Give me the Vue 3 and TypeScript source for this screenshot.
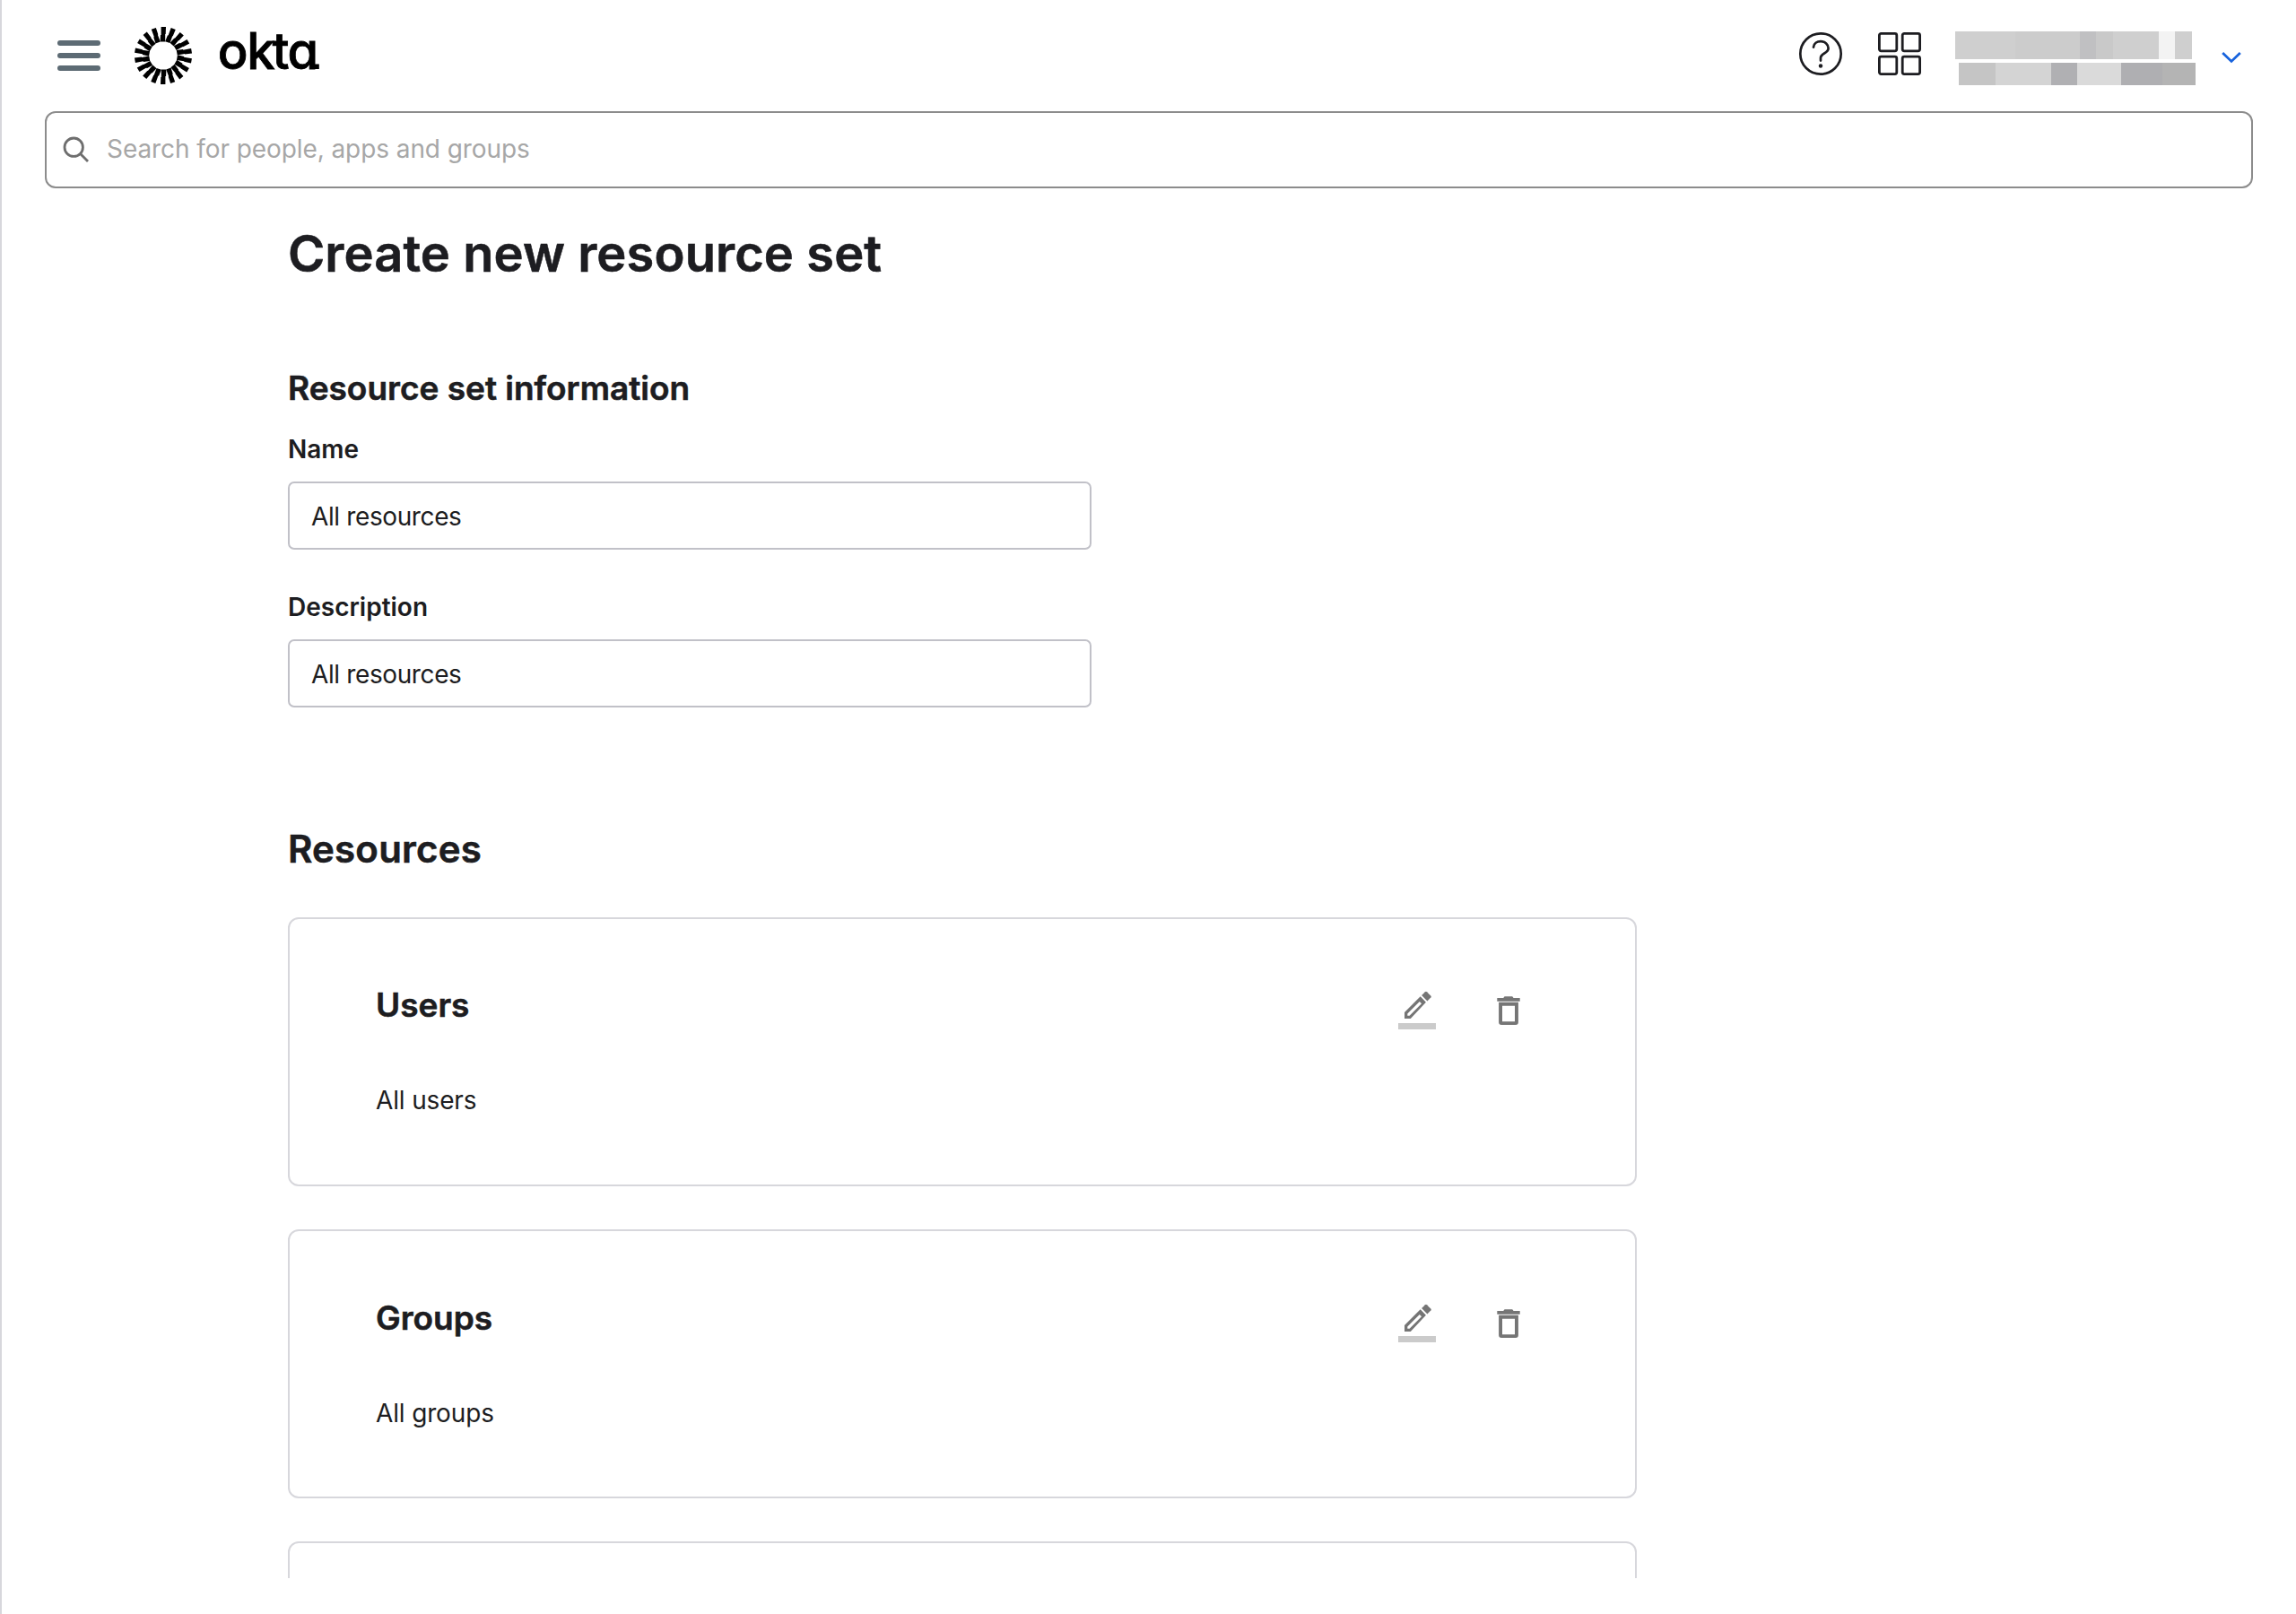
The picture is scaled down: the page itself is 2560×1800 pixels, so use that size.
<script setup lang="ts">
interface Block { width: number; color: string }
interface Field { id: string; label: string; value: string }
interface Resource { title: string; detail: string }

const rays: number[] = Array.from({ length: 18 }, (_, i) => i * 20)

const accountName: Block[] = [
  { width: 67, color: '#cfcfcf' },
  { width: 72, color: '#cccccc' },
  { width: 18, color: '#c0c0c2' },
  { width: 19, color: '#c9c9c9' },
  { width: 51, color: '#cfcfcf' },
  { width: 18, color: '#f3f3f3' },
  { width: 19, color: '#cfcfcf' },
]
const accountOrg: Block[] = [
  { width: 41, color: '#c5c5c5' },
  { width: 62, color: '#d4d4d4' },
  { width: 29, color: '#b0b0b3' },
  { width: 49, color: '#dadada' },
  { width: 46, color: '#afafb2' },
  { width: 37, color: '#b4b4b4' },
]

const fields: Field[] = [
  { id: 'name', label: 'Name', value: 'All resources' },
  { id: 'description', label: 'Description', value: 'All resources' },
]

const resources: Resource[] = [
  { title: 'Users', detail: 'All users' },
  { title: 'Groups', detail: 'All groups' },
]
</script>

<template>
  <div class="page">
    <header class="topbar">
      <button class="menu" aria-label="Menu"><i /><i /><i /></button>
      <svg class="aura" viewBox="-33 -33 66 66" width="66" height="66">
        <path
          v-for="a in rays"
          :key="a"
          d="M-2.4 -32H3L2.7 -24H2.2V-15.6H-3.4L-3.1 -23H-2.4Z"
          :transform="`rotate(${a})`"
        />
      </svg>
      <svg class="wordmark" width="116" height="60">
        <text x="0.8 33.2 61.6 78.4" y="49">okta</text>
        <path d="M104.4 41Q106 43.6 109.5 43.6H113.8V49H109.5Q104 49 103 43Z" />
      </svg>

      <div class="tools">
        <svg class="help" width="52" height="50" viewBox="0 0 52 50">
          <circle cx="26" cy="25" r="22.7" />
          <path d="M18 17.6C18.4 13.6 21.8 11.2 26 11.2C31 11.2 34.6 14.5 34.6 18.8C34.6 25 26 24 26 29.5V32.6" />
          <circle class="dot" cx="26" cy="38.5" r="2.2" />
        </svg>
        <svg class="apps" width="48" height="48" viewBox="0 0 48 48">
          <rect x="1.4" y="1.4" width="19.4" height="19.4" rx="2" />
          <rect x="27.2" y="1.4" width="19.4" height="19.4" rx="2" />
          <rect x="1.4" y="27.2" width="19.4" height="19.4" rx="2" />
          <rect x="27.2" y="27.2" width="19.4" height="19.4" rx="2" />
        </svg>
        <div class="account">
          <div class="row name">
            <i v-for="(b, i) in accountName" :key="i" :style="{ width: b.width + 'px', background: b.color }" />
          </div>
          <div class="row org">
            <i v-for="(b, i) in accountOrg" :key="i" :style="{ width: b.width + 'px', background: b.color }" />
          </div>
        </div>
        <svg class="chevron" width="22" height="14" viewBox="0 0 22 14">
          <path d="M1.2 2L11 11.4L20.8 2" />
        </svg>
      </div>
    </header>

    <div class="search">
      <svg width="30" height="30" viewBox="0 0 30 30">
        <circle cx="12.2" cy="12.2" r="10.2" />
        <path d="M19.6 19.6L28 28" />
      </svg>
      <span>Search for people, apps and groups</span>
    </div>

    <main class="content">
      <h1>Create new resource set</h1>

      <section class="info">
        <h2>Resource set information</h2>
        <div v-for="f in fields" :key="f.id" class="field">
          <label>{{ f.label }}</label>
          <div class="input">{{ f.value }}</div>
        </div>
      </section>

      <h2 class="list-title">Resources</h2>
      <div class="cards">
        <article v-for="r in resources" :key="r.title" class="card">
          <div class="card-head">
            <h3>{{ r.title }}</h3>
            <div class="actions">
              <svg class="edit" width="42" height="43" viewBox="0 0 42 43">
                <path
                  fill-rule="evenodd"
                  d="M7 31V24L24.7 6.3L30.9 12.7L13.8 31ZM10.3 27.7H12.6L26 14.2L23.8 12L10.3 25.5Z"
                />
                <path d="M26.1 5.1L30 1.2Q30.9 .4 31.9 1.2L36.5 5.7Q37.1 6.5 36.5 7.2L32.4 11.4Z" />
                <rect class="bar" y="36" width="42" height="7" />
              </svg>
              <svg class="trash" width="26" height="34" viewBox="0 0 26 34">
                <path d="M.3 3H7.2L8.6 1.2H17.2L18.6 3H25.7V6.7H.3Z" />
                <path
                  fill-rule="evenodd"
                  d="M2.1 7.8H23.9V30Q23.9 33 20.9 33H5.1Q2.1 33 2.1 30ZM6 11.7V29.2H20V11.7Z"
                />
              </svg>
            </div>
          </div>
          <p>{{ r.detail }}</p>
        </article>
        <article class="card" />
      </div>
    </main>
  </div>
</template>

<style>
body {
  margin: 0;
  background: #fff;
}
</style>

<style scoped>
.page {
  box-sizing: border-box;
  height: 1800px;
  overflow: hidden;
  border-left: 2px solid #d7d7dc;
  background: #fff;
  color: #1d1d21;
  font: 400 28px/34px Inter, sans-serif;
}
h1, h2, h3, p {
  margin: 0;
}
h1, h2, h3 {
  -webkit-text-stroke: 0.6px currentColor;
}
.topbar {
  display: flex;
  align-items: flex-start;
  height: 124px;
  padding: 0 61px 0 62px;
}
.menu {
  display: flex;
  flex-direction: column;
  gap: 8px;
  width: 48px;
  margin: 45px 37px 0 0;
  padding: 0;
  border: 0;
  background: none;
}
.menu i {
  height: 6px;
  border-radius: 3px;
  background: #5d6b74;
}
.aura {
  margin-top: 29px;
}
.wordmark {
  margin: 28px 0 0 27px;
  overflow: visible;
  font-size: 56px;
  font-weight: 500;
  font-feature-settings: 'cv11';
  fill: #000;
}
.wordmark text {
  stroke: #000;
  stroke-width: 0.8;
}
.tools {
  display: flex;
  align-items: flex-start;
  margin-left: auto;
}
.help, .apps, .chevron, .search svg {
  fill: none;
  stroke: #1d1d21;
}
.help {
  margin-top: 35px;
  stroke-width: 2.7;
  stroke-linecap: round;
}
.help .dot {
  fill: #1d1d21;
  stroke: none;
}
.apps {
  margin: 36px 0 0 38px;
  stroke-width: 2.8;
}
.account {
  margin: 35px 0 0 38px;
  width: 268px;
}
.row {
  display: flex;
}
.name {
  height: 31px;
}
.org {
  height: 25px;
  margin: 4px 0 0 4px;
}
.chevron {
  margin: 57px 0 0 29px;
  stroke: #1662dd;
  stroke-width: 2.8;
}
.search {
  box-sizing: border-box;
  display: flex;
  align-items: flex-start;
  height: 86px;
  margin: 0 48px;
  border: 2px solid #8c8c8c;
  border-radius: 12px;
  color: #a7a7a7;
}
.search svg {
  margin: 26px 0 0 18px;
  stroke: #6e6e6e;
  stroke-width: 2.8;
}
.search span {
  margin: 23px 0 0 19px;
  letter-spacing: -0.08px;
}
.content {
  width: 1504px;
  height: 1550px;
  padding-top: 39px;
  margin-left: 319px;
  box-sizing: border-box;
  overflow: hidden;
}
h1 {
  font-size: 56px;
  font-weight: 600;
  line-height: 68px;
  letter-spacing: 0.1px;
}
.info {
  margin-top: 94px;
}
h2 {
  font-size: 37px;
  font-weight: 600;
  line-height: 44px;
}
.field {
  display: flex;
  flex-direction: column;
  gap: 19px;
  width: 896px;
  margin-top: 29px;
}
.field + .field {
  margin-top: 47px;
}
.field label {
  font-weight: 600;
}
.input {
  box-sizing: border-box;
  height: 76px;
  padding: 20px 24px;
  border: 2px solid #c1c1c8;
  border-radius: 7px;
  letter-spacing: -0.38px;
}
.list-title {
  margin-top: 133px;
  font-size: 42px;
  line-height: 50px;
  letter-spacing: 0.2px;
}
.cards {
  display: flex;
  flex-direction: column;
  gap: 48px;
  margin-top: 51px;
}
.card {
  box-sizing: border-box;
  flex: none;
  height: 300px;
  padding: 74px 128px 0 96px;
  border: 2px solid #d7d7dc;
  border-radius: 12px;
}
.card + .card {
  padding-top: 75px;
}
.card-head {
  display: flex;
  justify-content: space-between;
  height: 44px;
}
h3 {
  font-size: 37px;
  font-weight: 600;
  line-height: 44px;
}
.card p {
  margin-top: 67px;
  letter-spacing: -0.15px;
}
.actions {
  display: flex;
  align-items: flex-start;
  gap: 68px;
  fill: #757575;
}
.edit {
  margin-top: 6px;
}
.edit .bar {
  fill: #cbcbcb;
}
.trash {
  margin-top: 11px;
}
</style>
